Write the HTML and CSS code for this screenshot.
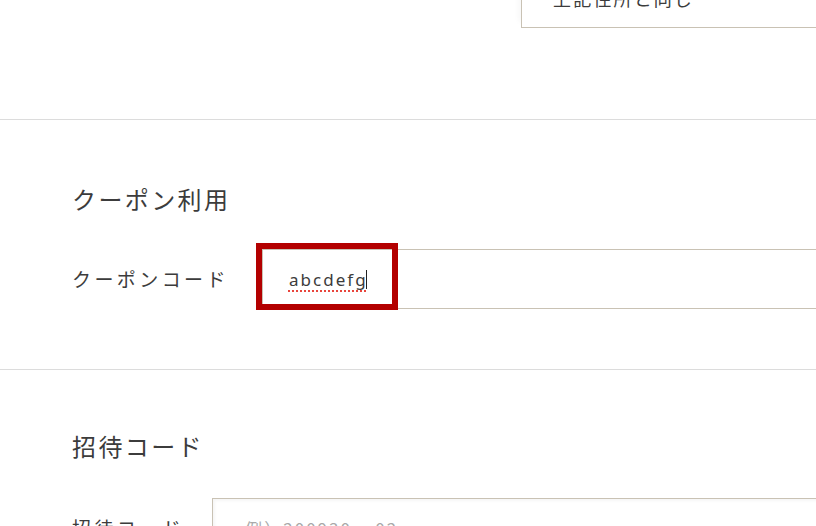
FILE: index.html
```html
<!DOCTYPE html>
<html lang="ja">
<head>
<meta charset="utf-8">
<title>クーポン利用</title>
<link rel="stylesheet" href="styles.css">
</head>
<body>
<div class="page">
  <section class="section section-top">
    <div class="choice-box">上記住所と同じ</div>
  </section>

  <section class="section section-coupon">
    <h2 class="section-title">クーポン利用</h2>
    <div class="form-row">
      <label class="form-label">クーポンコード</label>
      <div class="field field-coupon">
        <span class="field-value"><span class="misspelled">abcdefg</span><span class="caret"></span></span>
        <div class="highlight"></div>
      </div>
    </div>
  </section>

  <section class="section section-invite">
    <h2 class="section-title">招待コード</h2>
    <div class="form-row">
      <label class="form-label">招待コード</label>
      <div class="field field-invite">
        <span class="placeholder">例）200930aa02</span>
      </div>
    </div>
  </section>
</div>
</body>
</html>
```

FILE: styles.css
```css
html, body {
  margin: 0;
  padding: 0;
  background: #ffffff;
  overflow: hidden;
}

body {
  font-family: "Noto Sans CJK JP", "Noto Sans", sans-serif;
  color: #3c3c3c;
  width: 816px;
  height: 526px;
}

.page {
  width: 816px;
}

.section {
  border-bottom: 1px solid #dcdcdc;
  padding: 61px 0 60px 72px;
}

.section-top {
  margin-top: -32px;
  padding: 0 0 91px 521px;
}

.section-invite {
  padding-top: 58px;
}

.choice-box {
  box-sizing: border-box;
  width: 420px;
  height: 60px;
  border: 1px solid #c9c2b4;
  border-right: none;
  box-shadow: -8px 0 6px -6px rgba(0, 0, 0, 0.04);
  padding-left: 31px;
  font-size: 18px;
  line-height: 58px;
  letter-spacing: 0.12em;
  color: #3c3c3c;
}

.section-title {
  margin: 0 0 32px;
  font-size: 24px;
  line-height: 36px;
  font-weight: 400;
  letter-spacing: 0.1em;
  color: #3c3c3c;
}

.section-invite .section-title {
  margin-bottom: 34px;
}

.form-row {
  display: flex;
  align-items: center;
}

.form-label {
  font-size: 19px;
  line-height: 28px;
  letter-spacing: 0.18em;
  color: #3c3c3c;
  flex-shrink: 0;
}

.field {
  position: relative;
  box-sizing: border-box;
  height: 60px;
  width: 700px;
  flex-shrink: 0;
  border: 1px solid #c9c2b4;
  border-right: none;
  display: flex;
  align-items: center;
}

.field-coupon {
  margin-left: 33px;
  padding-left: 26px;
}

.field-invite {
  margin-left: 28px;
  padding-left: 32px;
  box-shadow: inset 2px 2px 3px rgba(0, 0, 0, 0.04);
}

.field-value {
  font-family: "Noto Sans", "Noto Sans CJK JP", sans-serif;
  font-size: 17px;
  letter-spacing: 0.12em;
  color: #3c3c3c;
  display: inline-flex;
  align-items: center;
}

.misspelled {
  text-decoration: underline dotted #e8453c;
  text-decoration-thickness: 2px;
  text-underline-offset: 5px;
}

.caret {
  display: inline-block;
  width: 1px;
  height: 19px;
  background: #222;
  margin-left: -2px;
}

.placeholder {
  font-size: 17px;
  letter-spacing: 0.12em;
  color: #a9a9a9;
}

.highlight {
  position: absolute;
  left: -7px;
  top: -7px;
  width: 142px;
  height: 67px;
  box-sizing: border-box;
  border: 6px solid #b30000;
}
```
